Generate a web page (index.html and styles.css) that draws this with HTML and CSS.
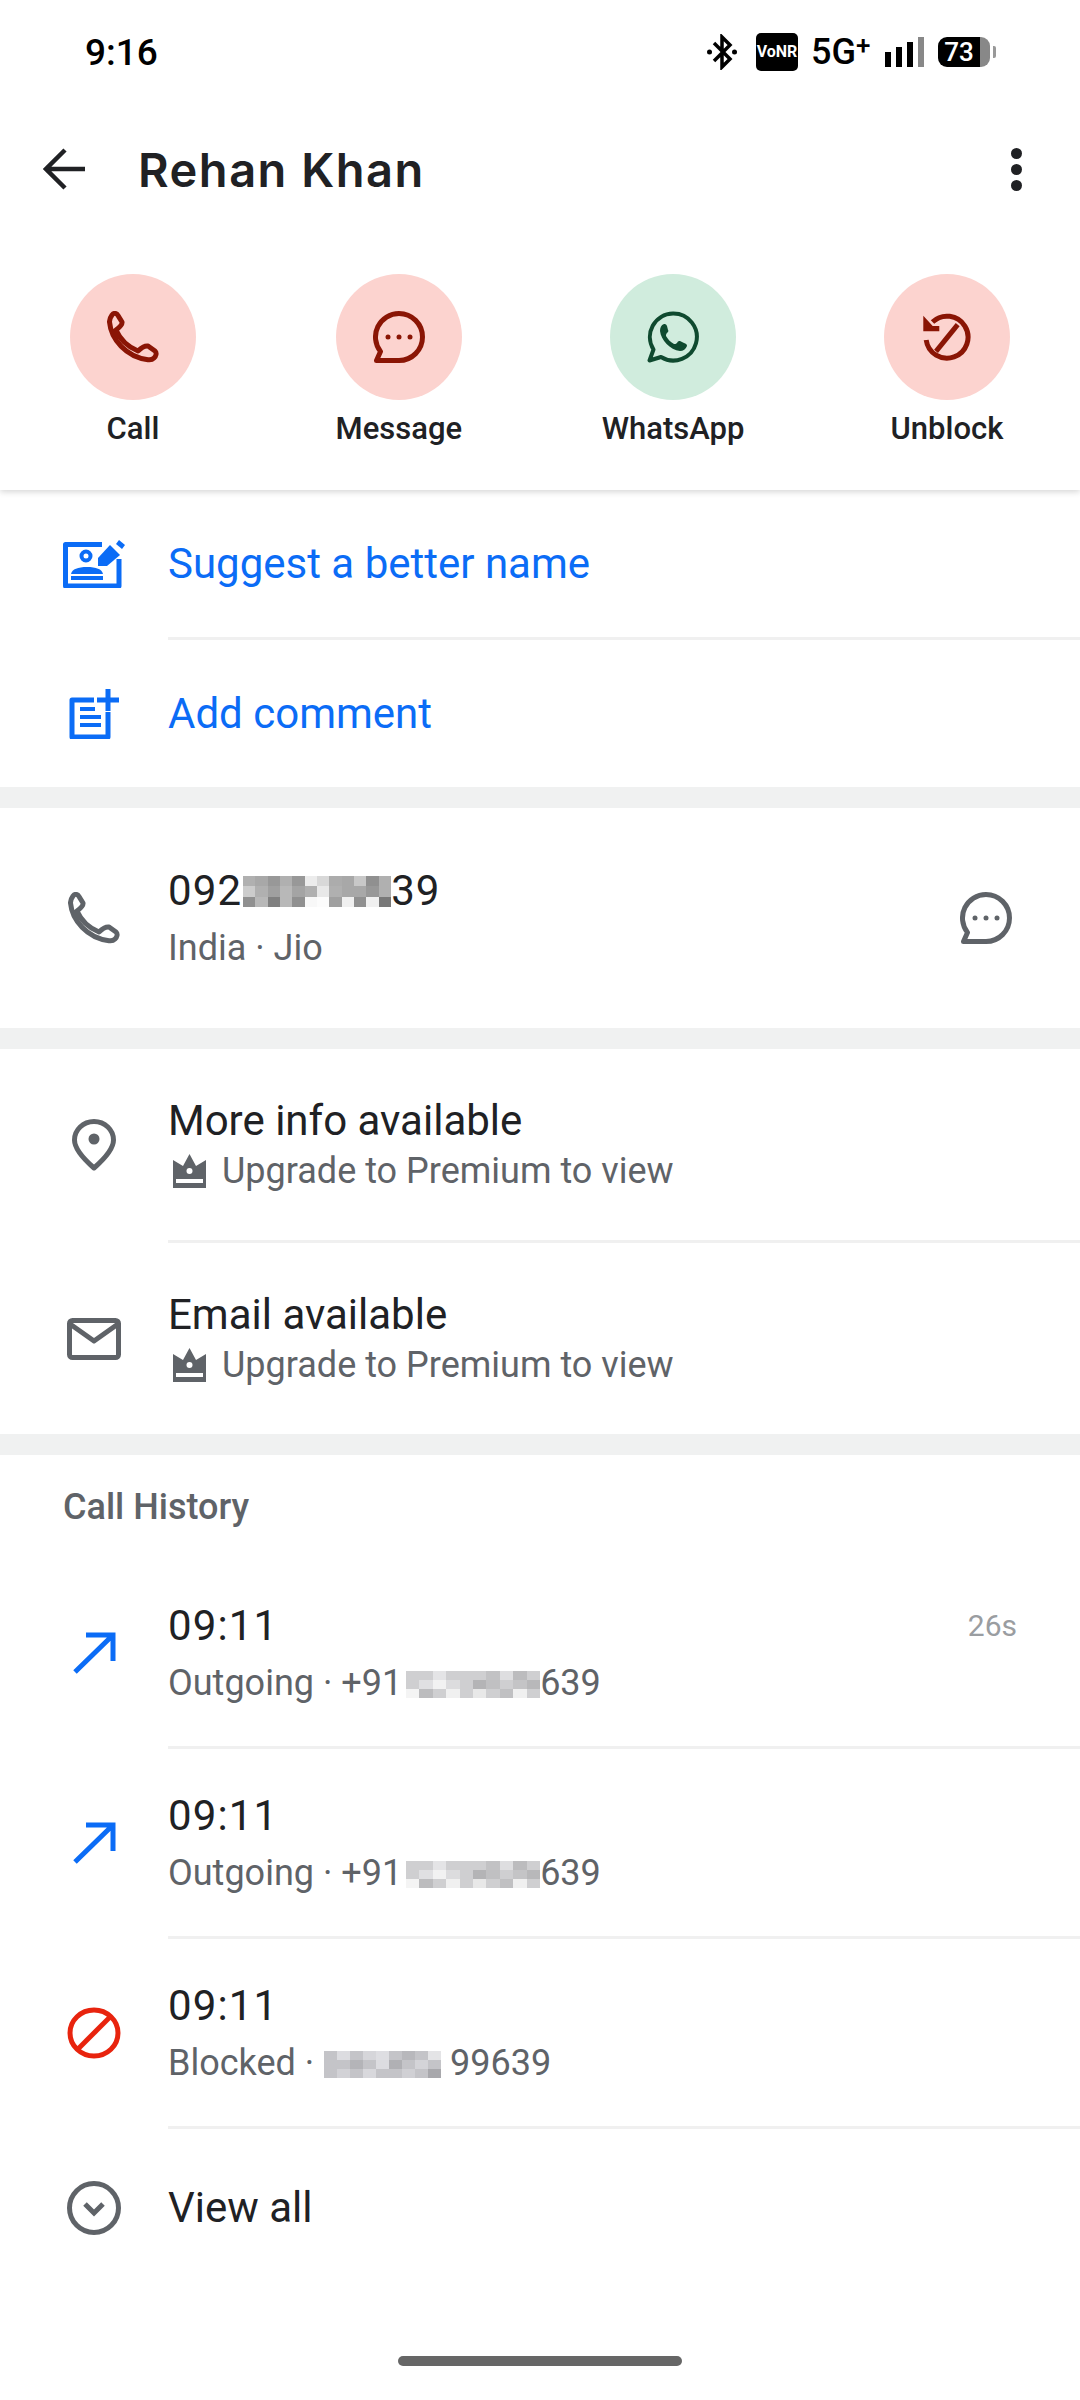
FILE: index.html
```html
<!DOCTYPE html>
<html lang="en">
<head>
  <meta charset="UTF-8">
  <meta name="viewport" content="width=device-width, initial-scale=1.0">
  <title>Rehan Khan</title>
  <link rel="stylesheet" href="styles.css">
</head>
<body>
  <div class="page">
    <header class="header">
      <div class="status-bar">
        <span class="clock">9:16</span>
        <div class="status-icons">
          <svg class="bluetooth" viewBox="0 0 30 36" width="30" height="36">
            <path d="M7 9 L23 25 L15 33 V3 L23 11 L7 27" fill="none" stroke="#000" stroke-width="3.5"/>
            <circle cx="2.5" cy="18" r="2.5" fill="#000"/>
            <circle cx="27.5" cy="18" r="2.5" fill="#000"/>
          </svg>
          <span class="vonr">VoNR</span>
          <span class="network">5G<sup>+</sup></span>
          <div class="signal">
            <i class="bar bar-1"></i>
            <i class="bar bar-2"></i>
            <i class="bar bar-3"></i>
            <i class="bar bar-4"></i>
          </div>
          <div class="battery">
            <span class="battery-body">73</span>
            <span class="battery-tip"></span>
          </div>
        </div>
      </div>

      <div class="toolbar">
        <svg class="back" viewBox="0 0 42 42" width="42" height="42">
          <path d="M42 21 H4 M22 2 L3 21 L22 40" fill="none" stroke="#202124" stroke-width="4.5"/>
        </svg>
        <h1 class="name">Rehan Khan</h1>
        <div class="more"><i></i><i></i><i></i></div>
      </div>

      <div class="actions">
        <div class="action">
          <div class="circle circle-red">
            <svg class="dark-red" viewBox="0 0 52 52" width="52" height="52">
              <path class="stroke" d="M5 4 C7 1.5 9.5 2 11 4.5 L15 11 C15.5 13 13 16 9 19 C13 28 21 36 31 40 C34 37 37 34.5 41 35 L48 40 C50 42 49 45 47 47 C45 49 43 49 41 48.7 C19 46 4 28 2.5 11 C2.4 8 3.5 6 5 4Z"/>
            </svg>
          </div>
          <span>Call</span>
        </div>
        <div class="action">
          <div class="circle circle-red">
            <svg class="dark-red" viewBox="0 0 52 52" width="52" height="52">
              <path class="stroke" d="M26 2.5 A23.5 23.5 0 0 1 26 49.5 H3.5 L7.5 40.5 A23.5 23.5 0 0 1 26 2.5Z"/>
              <circle class="dot" cx="15" cy="26" r="2.5"/>
              <circle class="dot" cx="26" cy="26" r="2.5"/>
              <circle class="dot" cx="37" cy="26" r="2.5"/>
            </svg>
          </div>
          <span>Message</span>
        </div>
        <div class="action">
          <div class="circle circle-green">
            <svg class="dark-green" viewBox="0 0 52 52" width="52" height="52">
              <path class="stroke thin" d="M26 2.5 A23.5 23.5 0 1 1 14 46 L2.5 49.5 L6.5 38.5 A23.5 23.5 0 0 1 26 2.5Z"/>
              <path class="dot" d="M17 13 C14 14 13 17 13 20 C14 29 23 39 33 40 C36 40 39 38 40 35 C40 33 39 33 37 32 L33 30 C32 30 31 30 30 32 C29 33 28 33 27 33 C23 31 21 28 19 25 C19 24 19 23 20 22 C21 21 22 20 21 19 L20 15 C19 13 18 13 17 13Z"/>
            </svg>
          </div>
          <span>WhatsApp</span>
        </div>
        <div class="action">
          <div class="circle circle-red">
            <svg class="dark-red" viewBox="0 0 48 48" width="48" height="48">
              <path class="stroke plain" d="M9.5 9 A21 21 0 1 1 3.2 27"/>
              <path class="stroke plain" d="M34.7 11.7 L13 38.3"/>
              <path class="dot" d="M0.3 2.7 L9.7 13 H16.3 V18.3 H0.3Z"/>
            </svg>
          </div>
          <span>Unblock</span>
        </div>
      </div>
    </header>

    <section class="section">
      <div class="row row-link">
        <div class="row-icon">
          <svg class="blue" viewBox="0 0 62 48" width="62" height="48">
            <path class="stroke" d="M39 4.5 H2.5 V46 H56 V19"/>
            <circle class="stroke thin" cx="23" cy="16" r="4.5"/>
            <path class="dot" d="M8 34 C9 29 15 27 24 27 C33 27 39 29 40 34Z"/>
            <rect class="dot" x="8" y="36" width="32" height="4"/>
            <path class="dot" d="M35 26 V18 L47 5 L57 15 L44 26Z"/>
            <path class="dot" d="M53 4 L56 0 L62 5 L59 9Z"/>
          </svg>
        </div>
        <div class="row-title link">Suggest a better name</div>
      </div>
      <div class="row row-link">
        <div class="row-icon">
          <svg class="blue" viewBox="0 0 50 50" width="50" height="50">
            <path class="stroke" d="M25 11 H3 V48 H39 V23"/>
            <path class="stroke plain thin" d="M11 20 H26 M11 28 H32 M11 36 H32"/>
            <path class="stroke plain" d="M39 0 V22 M28 11 H50"/>
          </svg>
        </div>
        <div class="row-title link">Add comment</div>
      </div>
    </section>

    <section class="section">
      <div class="row row-phone">
        <div class="row-icon">
          <svg class="grey" viewBox="0 0 52 52" width="52" height="52">
            <path class="stroke" d="M5 4 C7 1.5 9.5 2 11 4.5 L15 11 C15.5 13 13 16 9 19 C13 28 21 36 31 40 C34 37 37 34.5 41 35 L48 40 C50 42 49 45 47 47 C45 49 43 49 41 48.7 C19 46 4 28 2.5 11 C2.4 8 3.5 6 5 4Z"/>
          </svg>
        </div>
        <div class="row-text">
          <div class="row-title number digits">
            092<svg class="blur" width="148" height="31" viewBox="0 0 12 3" preserveAspectRatio="none">
              <rect width="1" height="1" fill="#b0b0b0"/><rect x="1" width="1" height="1" fill="#a8a8a8"/><rect x="2" width="1" height="1" fill="#989898"/><rect x="3" width="1" height="1" fill="#b0b0b0"/><rect x="4" width="1" height="1" fill="#989898"/><rect x="5" width="1" height="1" fill="#ececec"/><rect x="6" width="1" height="1" fill="#d8d8d8"/><rect x="7" width="1" height="1" fill="#acacac"/><rect x="8" width="1" height="1" fill="#a8a8a8"/><rect x="9" width="1" height="1" fill="#c8c8c8"/><rect x="10" width="1" height="1" fill="#909090"/><rect x="11" width="1" height="1" fill="#b0b0b0"/>
              <rect y="1" width="1" height="1" fill="#cccccc"/><rect x="1" y="1" width="1" height="1" fill="#b0b0b0"/><rect x="2" y="1" width="1" height="1" fill="#a0a0a0"/><rect x="3" y="1" width="1" height="1" fill="#b8b8b8"/><rect x="4" y="1" width="1" height="1" fill="#a4a4a4"/><rect x="5" y="1" width="1" height="1" fill="#b0b0b0"/><rect x="6" y="1" width="1" height="1" fill="#e8e8e8"/><rect x="7" y="1" width="1" height="1" fill="#b0b0b0"/><rect x="8" y="1" width="1" height="1" fill="#a8a8a8"/><rect x="9" y="1" width="1" height="1" fill="#a8a8a8"/><rect x="10" y="1" width="1" height="1" fill="#989898"/><rect x="11" y="1" width="1" height="1" fill="#b0b0b0"/>
              <rect y="2" width="1" height="1" fill="#909090"/><rect x="1" y="2" width="1" height="1" fill="#b8b8b8"/><rect x="2" y="2" width="1" height="1" fill="#808080"/><rect x="3" y="2" width="1" height="1" fill="#b8b8b8"/><rect x="4" y="2" width="1" height="1" fill="#909090"/><rect x="5" y="2" width="1" height="1" fill="#f8f8f8"/><rect x="6" y="2" width="1" height="1" fill="#fcfcfc"/><rect x="7" y="2" width="1" height="1" fill="#a0a0a0"/><rect x="8" y="2" width="1" height="1" fill="#f0f0f0"/><rect x="9" y="2" width="1" height="1" fill="#909090"/><rect x="10" y="2" width="1" height="1" fill="#f0f0f0"/><rect x="11" y="2" width="1" height="1" fill="#787878"/>
            </svg>39
          </div>
          <div class="row-sub spaced">India · Jio</div>
        </div>
        <svg class="grey row-end" viewBox="0 0 52 52" width="52" height="52">
          <path class="stroke" d="M26 2.5 A23.5 23.5 0 0 1 26 49.5 H3.5 L7.5 40.5 A23.5 23.5 0 0 1 26 2.5Z"/>
          <circle class="dot" cx="15" cy="26" r="2.5"/>
          <circle class="dot" cx="26" cy="26" r="2.5"/>
          <circle class="dot" cx="37" cy="26" r="2.5"/>
        </svg>
      </div>
    </section>

    <section class="section">
      <div class="row row-info">
        <div class="row-icon">
          <svg class="grey" viewBox="0 0 44 52" width="44" height="52">
            <path class="stroke" d="M22 2.5 C11 2.5 2.5 11 2.5 21 C2.5 31 14 42 22 49 C30 42 41.5 31 41.5 21 C41.5 11 33 2.5 22 2.5Z"/>
            <circle class="dot" cx="22" cy="20" r="5.5"/>
          </svg>
        </div>
        <div class="row-text">
          <div class="row-title">More info available</div>
          <div class="row-sub premium">
            <svg class="crown" viewBox="0 0 35 34" width="35" height="34">
              <path d="M17.5 0 L24 12 L34 6 V34 H1 V6 L11 12Z" fill="#5f6368"/>
              <circle cx="17.5" cy="17" r="3" fill="#fff"/>
              <rect x="4" y="25" width="27" height="4" fill="#fff"/>
            </svg>
            Upgrade to Premium to view
          </div>
        </div>
      </div>
      <div class="row row-info">
        <div class="row-icon">
          <svg class="grey" viewBox="0 0 54 42" width="54" height="42">
            <rect class="stroke" x="2.5" y="2.5" width="49" height="37" rx="3"/>
            <path class="stroke" d="M3 6 L27 23 L51 6"/>
          </svg>
        </div>
        <div class="row-text">
          <div class="row-title">Email available</div>
          <div class="row-sub premium">
            <svg class="crown" viewBox="0 0 35 34" width="35" height="34">
              <path d="M17.5 0 L24 12 L34 6 V34 H1 V6 L11 12Z" fill="#5f6368"/>
              <circle cx="17.5" cy="17" r="3" fill="#fff"/>
              <rect x="4" y="25" width="27" height="4" fill="#fff"/>
            </svg>
            Upgrade to Premium to view
          </div>
        </div>
      </div>
    </section>

    <section class="section history">
      <h2 class="history-title">Call History</h2>
      <div class="row row-call">
        <div class="row-icon">
          <svg class="blue" viewBox="0 0 44 42" width="44" height="42">
            <path class="stroke plain" d="M3 40 L41 3 M14 3 H41 V29"/>
          </svg>
        </div>
        <div class="row-text">
          <div class="row-title call-title"><span class="digits">09:11</span><span class="duration">26s</span></div>
          <div class="row-sub spaced">
            Outgoing · +91<svg class="blur blur-call" width="134" height="27" viewBox="0 0 10 3" preserveAspectRatio="none">
              <rect width="10" height="3" fill="#cfcfd1"/>
              <rect x="2" width="1" height="1" fill="#e4e4e6"/><rect x="6" width="1" height="1" fill="#c2c2c4"/><rect x="7" width="1" height="1" fill="#dedee0"/><rect x="8" width="1" height="1" fill="#bcbcbe"/>
              <rect x="1" y="1" width="1" height="1" fill="#e0e0e2"/><rect x="2" y="1" width="1" height="1" fill="#f2f2f2"/><rect x="3" y="1" width="1" height="1" fill="#dcdcde"/><rect x="5" y="1" width="1" height="1" fill="#b4b4b6"/><rect x="6" y="1" width="1" height="1" fill="#c0c0c2"/><rect x="8" y="1" width="1" height="1" fill="#c4c4c6"/><rect x="9" y="1" width="1" height="1" fill="#b8b8ba"/>
              <rect y="2" width="1" height="1" fill="#f4f4f4"/><rect x="1" y="2" width="1" height="1" fill="#bcbcbe"/><rect x="3" y="2" width="1" height="1" fill="#f0f0f0"/><rect x="5" y="2" width="1" height="1" fill="#e8e8e8"/><rect x="7" y="2" width="1" height="1" fill="#c0c0c2"/><rect x="8" y="2" width="1" height="1" fill="#f0f0f0"/>
            </svg>639
          </div>
        </div>
      </div>
      <div class="row row-call">
        <div class="row-icon">
          <svg class="blue" viewBox="0 0 44 42" width="44" height="42">
            <path class="stroke plain" d="M3 40 L41 3 M14 3 H41 V29"/>
          </svg>
        </div>
        <div class="row-text">
          <div class="row-title digits">09:11</div>
          <div class="row-sub spaced">
            Outgoing · +91<svg class="blur blur-call" width="134" height="27" viewBox="0 0 10 3" preserveAspectRatio="none">
              <rect width="10" height="3" fill="#cfcfd1"/>
              <rect x="2" width="1" height="1" fill="#e4e4e6"/><rect x="6" width="1" height="1" fill="#c2c2c4"/><rect x="7" width="1" height="1" fill="#dedee0"/><rect x="8" width="1" height="1" fill="#bcbcbe"/>
              <rect x="1" y="1" width="1" height="1" fill="#e0e0e2"/><rect x="2" y="1" width="1" height="1" fill="#f2f2f2"/><rect x="3" y="1" width="1" height="1" fill="#dcdcde"/><rect x="5" y="1" width="1" height="1" fill="#b4b4b6"/><rect x="6" y="1" width="1" height="1" fill="#c0c0c2"/><rect x="8" y="1" width="1" height="1" fill="#c4c4c6"/><rect x="9" y="1" width="1" height="1" fill="#b8b8ba"/>
              <rect y="2" width="1" height="1" fill="#f4f4f4"/><rect x="1" y="2" width="1" height="1" fill="#bcbcbe"/><rect x="3" y="2" width="1" height="1" fill="#f0f0f0"/><rect x="5" y="2" width="1" height="1" fill="#e8e8e8"/><rect x="7" y="2" width="1" height="1" fill="#c0c0c2"/><rect x="8" y="2" width="1" height="1" fill="#f0f0f0"/>
            </svg>639
          </div>
        </div>
      </div>
      <div class="row row-call">
        <div class="row-icon">
          <svg class="red" viewBox="0 0 54 52" width="54" height="52">
            <ellipse class="stroke" cx="27" cy="26" rx="24" ry="23"/>
            <path class="stroke plain" d="M43 10 L11 42"/>
          </svg>
        </div>
        <div class="row-text">
          <div class="row-title digits">09:11</div>
          <div class="row-sub spaced">
            Blocked · <svg class="blur" width="117" height="27" viewBox="0 0 9 3" preserveAspectRatio="none">
              <rect width="9" height="3" fill="#c4c4c8"/>
              <rect x="1" width="1" height="1" fill="#dcdce0"/><rect x="3" width="1" height="1" fill="#d6d6da"/><rect x="4" width="1" height="1" fill="#dedee2"/><rect x="6" width="1" height="1" fill="#b8b8bc"/><rect x="8" width="1" height="1" fill="#e4e4e6"/>
              <rect x="2" y="1" width="1" height="1" fill="#b4b4b8"/><rect x="4" y="1" width="1" height="1" fill="#dcdce0"/><rect x="5" y="1" width="1" height="1" fill="#b0b0b4"/><rect x="7" y="1" width="1" height="1" fill="#d4d4d8"/>
              <rect x="1" y="2" width="1" height="1" fill="#d2d2d6"/><rect x="3" y="2" width="1" height="1" fill="#d8d8dc"/><rect x="6" y="2" width="1" height="1" fill="#d0d0d4"/><rect x="8" y="2" width="1" height="1" fill="#a8a8ac"/>
            </svg> 99639
          </div>
        </div>
      </div>
      <div class="row row-view">
        <div class="row-icon">
          <svg class="grey" viewBox="0 0 54 54" width="54" height="54">
            <circle class="stroke" cx="27" cy="27" r="24.5"/>
            <path class="stroke plain" d="M18 23 L27 32 L36 23"/>
          </svg>
        </div>
        <div class="row-title">View all</div>
      </div>
    </section>

    <div class="gesture"><i></i></div>
  </div>
</body>
</html>
```

FILE: styles.css
```css
/* General styling */
body {
  margin: 0;
  background: #fff;
  font-family: 'Roboto', 'Liberation Sans', sans-serif;
  color: #202124;
}

.page {
  height: 2400px;
  display: flex;
  flex-direction: column;
  overflow: hidden;
}

/* Header */
.header {
  position: relative;
  height: 490px;
  background: #fff;
  box-shadow: 0 2px 6px rgba(0, 0, 0, 0.16);
}

.status-bar {
  height: 104px;
  display: flex;
  align-items: center;
  padding: 0 84px 0 85px;
  color: #000;
}

.clock {
  font-size: 37px;
  font-weight: 500;
}

.status-icons {
  margin-left: auto;
  display: flex;
  align-items: center;
}

.bluetooth {
  margin-right: 19px;
}

.vonr {
  width: 42px;
  height: 38px;
  margin-right: 13px;
  background: #000;
  border-radius: 5px;
  color: #fff;
  font-size: 16px;
  font-weight: 700;
  line-height: 38px;
  text-align: center;
}

.network {
  width: 58px;
  margin-right: 16px;
  font-size: 36px;
  font-weight: 500;
  line-height: 36px;
  white-space: nowrap;
}

.network sup {
  font-size: 26px;
  line-height: 0;
  vertical-align: 10px;
}

.signal {
  display: flex;
  align-items: flex-end;
  gap: 5px;
  height: 30px;
  margin-right: 14px;
}

.bar {
  display: block;
  width: 6px;
  background: #000;
}

.bar-1 { height: 15px; }
.bar-2 { height: 20px; }
.bar-3 { height: 25px; }
.bar-4 { height: 30px; background: #888; }

.battery {
  display: flex;
  align-items: center;
}

.battery-body {
  width: 52px;
  height: 30px;
  border-radius: 9px;
  background: linear-gradient(to right, #000 42px, #888 42px);
  color: #fff;
  font-size: 26px;
  font-weight: 500;
  line-height: 30px;
  padding-right: 10px;
  box-sizing: border-box;
  text-align: center;
}

.battery-tip {
  width: 3px;
  height: 12px;
  margin-left: 3px;
  border-radius: 0 2px 2px 0;
  background: #999;
}

.toolbar {
  height: 130px;
  display: flex;
  align-items: center;
  padding: 0 58px 0 43px;
}

.name {
  margin: 0 0 0 53px;
  font-family: 'Inter', sans-serif;
  font-size: 47px;
  font-weight: 600;
  letter-spacing: 1.5px;
  color: #202124;
}

.more {
  margin-left: auto;
  display: flex;
  flex-direction: column;
  gap: 5px;
}

.more i {
  display: block;
  width: 11px;
  height: 11px;
  border-radius: 50%;
  background: #202124;
}

.actions {
  display: flex;
  justify-content: space-between;
  padding: 40px 70px 0;
}

.action {
  min-width: 126px;
  display: flex;
  flex-direction: column;
  align-items: center;
  font-size: 31px;
  font-weight: 500;
}

.action span {
  margin-top: 7px;
  line-height: 44px;
  white-space: nowrap;
}

.circle {
  width: 126px;
  height: 126px;
  border-radius: 50%;
  display: flex;
  align-items: center;
  justify-content: center;
}

.circle-red { background: #fcd3cf; }
.circle-green { background: #d0ecdd; }

/* Icon colours */
svg { display: block; flex-shrink: 0; }
.dark-red { color: #8a1505; }
.dark-green { color: #0f4a2f; }
.blue { color: #0b6cf6; }
.grey { color: #5f6368; }
.red { color: #e8240e; }

.stroke {
  fill: none;
  stroke: currentColor;
  stroke-width: 5;
  stroke-linejoin: round;
}

.stroke.plain { stroke-linejoin: miter; }
.stroke.thin { stroke-width: 4; }
.dot { fill: currentColor; }

/* Rows */
.section {
  background: #fff;
  border-bottom: 21px solid #f0f1f1;
}

.section:last-of-type { border-bottom: none; }

.row {
  display: flex;
  align-items: center;
  box-sizing: border-box;
}

/* Dividers sit only under the text column */
.row + .row {
  padding-top: 3px;
  background: linear-gradient(#f0f0f0, #f0f0f0) 168px 0 / 100% 3px no-repeat;
}

.row-icon {
  width: 64px;
  margin: 0 42px 0 62px;
  display: flex;
  justify-content: center;
}

.row-text {
  flex: 1;
  padding-top: 3px;
}

.row-title {
  flex: 1;
  font-size: 42px;
  line-height: 50px;
  color: #202124;
}

.link { color: #0b6cf6; }

.digits { letter-spacing: 1.1px; }

.row-sub {
  font-size: 36px;
  line-height: 50px;
  color: #5f6368;
}

.spaced { margin-top: 7px; }

.number {
  display: flex;
  align-items: center;
}

.blur {
  display: inline-block;
  margin-left: 1px;
  shape-rendering: crispEdges;
}

.row-sub .blur {
  vertical-align: -3px;
}

.blur-call { margin-left: 4px; }

.row-end { margin-right: 68px; }

.premium {
  display: flex;
  align-items: center;
  gap: 15px;
}

.crown { margin-left: 4px; }

.row-link { height: 147px; }
.row-link + .row-link { height: 150px; }

.row-phone { height: 220px; }

.row-info { height: 191px; }
.row-info + .row-info { height: 194px; }

.history-title {
  margin: 0;
  height: 104px;
  padding: 32px 0 0 63px;
  box-sizing: border-box;
  font-size: 36px;
  font-weight: 500;
  line-height: 40px;
  color: #5f6368;
}

.row-call { height: 187px; }
.row-call + .row-call { height: 190px; }

.row-view { height: 160px; }

.call-title {
  display: flex;
  justify-content: space-between;
  padding-right: 63px;
}

.duration {
  font-size: 30px;
  color: #9a9da1;
}

.gesture {
  margin-top: auto;
  height: 44px;
  display: flex;
  justify-content: center;
}

.gesture i {
  display: block;
  width: 284px;
  height: 10px;
  border-radius: 5px;
  background: #666;
}
```
